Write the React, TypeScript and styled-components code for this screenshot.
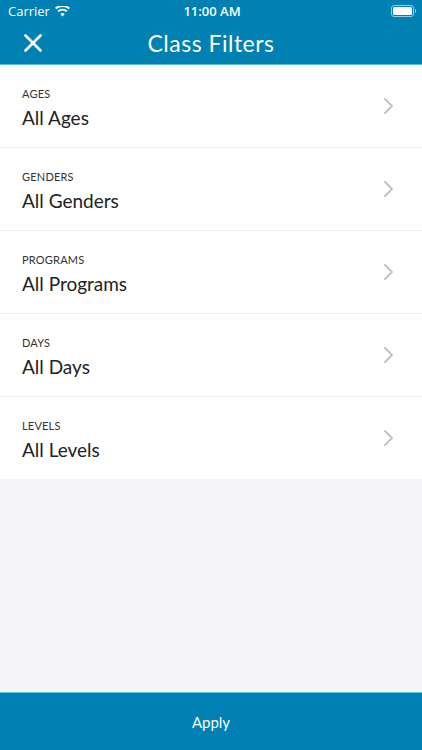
import React from "react";
import styled, { createGlobalStyle } from "styled-components";

const Global = createGlobalStyle`
  html, body { margin: 0; padding: 0; }
  body { font-family: Lato, "Open Sans", sans-serif; background: #f5f5f7; }
  #root { height: 750px; }
`;

const Screen = styled.div`
  width: 422px;
  height: 750px;
  display: flex;
  flex-direction: column;
  background: #f5f5f7;
  overflow: hidden;
`;

const Header = styled.header`
  background: #0080b3;
  border-bottom: 1px solid #5cb8dc;
  height: 64px;
  display: flex;
  flex-direction: column;
  color: #fff;
`;

const StatusBar = styled.div`
  height: 22px;
  display: grid;
  grid-template-columns: 1fr auto 1fr;
  align-items: center;
  padding: 0 6px 0 8px;
  font-family: "Open Sans", sans-serif;
  font-size: 13px;
`;

const Carrier = styled.div`
  display: flex;
  align-items: center;
  gap: 5px;
`;

const Time = styled.div`
  font-weight: 600;
  font-size: 13px;
`;

const Battery = styled.div`
  justify-self: end;
  display: flex;
  align-items: center;
  gap: 1px;
`;

const BatteryBody = styled.div`
  width: 19px;
  height: 8px;
  border: 1px solid rgba(255, 255, 255, 0.6);
  border-radius: 3px;
  padding: 1px;
  display: flex;
`;

const BatteryFill = styled.div`
  flex: 1;
  background: #fff;
  border-radius: 1.5px;
`;

const BatteryTip = styled.div`
  width: 1.5px;
  height: 4px;
  background: rgba(255, 255, 255, 0.6);
  border-radius: 0 1px 1px 0;
`;

const NavBar = styled.div`
  flex: 1;
  position: relative;
  display: flex;
  align-items: center;
  justify-content: center;
`;

const CloseButton = styled.button`
  position: absolute;
  left: 20px;
  top: 8px;
  width: 26px;
  height: 26px;
  padding: 0;
  border: 0;
  background: none;
  display: flex;
  align-items: center;
  justify-content: center;
`;

const Title = styled.h1`
  margin: 0;
  margin-top: -1px;
  font-size: 23px;
  font-weight: 400;
  letter-spacing: 0.5px;
`;

const List = styled.div`
  background: #fff;
  display: flex;
  flex-direction: column;
`;

const Row = styled.div`
  height: 83px;
  box-sizing: border-box;
  border-bottom: 1px solid #ececec;
  padding: 0 28px 0 22px;
  display: flex;
  align-items: center;
  &:last-child { border-bottom: 0; height: 82px; }
`;

const RowText = styled.div`
  flex: 1;
  display: flex;
  flex-direction: column;
  padding-top: 4px;
`;

const Label = styled.div`
  font-size: 11px;
  line-height: 14px;
  color: #333;
  text-transform: uppercase;
  letter-spacing: 0.2px;
`;

const Value = styled.div`
  margin-top: 5px;
  font-size: 19px;
  line-height: 24px;
  color: #222;
`;

const Spacer = styled.div`
  flex: 1;
`;

const ApplyBar = styled.button`
  height: 58px;
  border: 0;
  border-top: 1px solid #6bbfe0;
  background: #0080b3;
  color: #fff;
  font-family: Lato, sans-serif;
  font-size: 15px;
  padding: 0;
  width: 100%;
`;

const Chevron = () => (
  <svg width="11" height="18" viewBox="0 0 11 18" fill="none">
    <path d="M2 2l7 7-7 7" stroke="#c2c2c6" strokeWidth="2" strokeLinecap="round" strokeLinejoin="round" />
  </svg>
);

const rows = [
  ["Ages", "All Ages"],
  ["Genders", "All Genders"],
  ["Programs", "All Programs"],
  ["Days", "All Days"],
  ["Levels", "All Levels"],
];

export default function App() {
  return (
    <>
      <Global />
      <Screen>
        <Header>
          <StatusBar>
            <Carrier>
              Carrier
              <svg width="15" height="11" viewBox="0 0 15 11">
                <path d="M7.5 10.5l2.2-2.6a3.4 3.4 0 0 0-4.4 0z" fill="#fff" />
                <path d="M3.7 6.1a5.8 5.8 0 0 1 7.6 0l1.3-1.5a7.8 7.8 0 0 0-10.2 0z" fill="#fff" />
                <path d="M1.3 3.3a9.6 9.6 0 0 1 12.4 0L15 1.8A11.6 11.6 0 0 0 0 1.8z" fill="#fff" />
              </svg>
            </Carrier>
            <Time>11:00 AM</Time>
            <Battery>
              <BatteryBody>
                <BatteryFill />
              </BatteryBody>
              <BatteryTip />
            </Battery>
          </StatusBar>
          <NavBar>
            <CloseButton aria-label="Close">
              <svg width="18" height="18" viewBox="0 0 18 18">
                <path d="M1.5 1.5l15 15M16.5 1.5l-15 15" stroke="#fff" strokeWidth="2.6" strokeLinecap="round" />
              </svg>
            </CloseButton>
            <Title>Class Filters</Title>
          </NavBar>
        </Header>
        <List>
          {rows.map(([label, value]) => (
            <Row key={label}>
              <RowText>
                <Label>{label}</Label>
                <Value>{value}</Value>
              </RowText>
              <Chevron />
            </Row>
          ))}
        </List>
        <Spacer />
        <ApplyBar>Apply</ApplyBar>
      </Screen>
    </>
  );
}
